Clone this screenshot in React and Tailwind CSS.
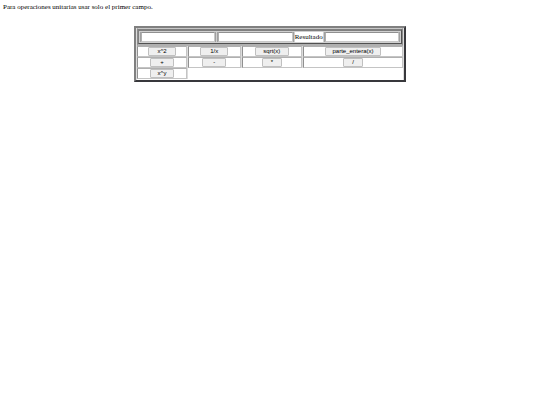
import React, { useState } from "react";
import clsx from "clsx";

const unary = {
  "x^2": (x) => x * x,
  "1/x": (x) => 1 / x,
  "sqrt(x)": (x) => Math.sqrt(x),
  "parte_entera(x)": (x) => Math.trunc(x),
};

const binary = {
  "+": (x, y) => x + y,
  "-": (x, y) => x - y,
  "*": (x, y) => x * y,
  "/": (x, y) => x / y,
  "x^y": (x, y) => Math.pow(x, y),
};

const rows = [
  [
    { op: "x^2", width: "w-7" },
    { op: "1/x", width: "w-7" },
    { op: "sqrt(x)", width: "w-[34px]" },
    { op: "parte_entera(x)", width: "w-14" },
  ],
  [
    { op: "+", width: "w-6" },
    { op: "-", width: "w-6" },
    { op: "*", width: "w-5" },
    { op: "/", width: "w-5" },
  ],
  [{ op: "x^y", width: "w-6" }],
];

const cellBorder = "border border-t-[#b0b0b0] border-l-[#909090] border-r-[#c4c4c4] border-b-[#c4c4c4]";

const Field = ({ label, value, onChange, readOnly }) => (
  <td className="border-x border-[#a0a0a0] p-0">
    <input
      type="text"
      aria-label={label}
      value={value}
      onChange={onChange}
      readOnly={readOnly}
      className="block h-[10px] w-full border border-t-[#909090] border-l-[#b0b0b0] border-r-[#c8c8c8] border-b-[#c8c8c8] bg-white px-px text-[6px] outline-none"
    />
  </td>
);

const OpButton = ({ op, width, onClick }) => (
  <button
    type="button"
    onClick={onClick}
    className={clsx(
      "mx-auto block h-[9px] rounded-[1px] border border-[#c0c0c0] bg-[#efefef] text-center font-['Liberation_Sans',sans-serif] text-[6px] leading-[7px] whitespace-nowrap text-black",
      width
    )}
  >
    {op}
  </button>
);

const App = () => {
  const [x, setX] = useState("");
  const [y, setY] = useState("");
  const [result, setResult] = useState("");

  const handleOperation = (op) => {
    const value = unary[op] ? unary[op](Number(x)) : binary[op](Number(x), Number(y));
    setResult(String(value));
  };

  return (
    <div className="bg-white pt-[3px] font-['Liberation_Serif',serif] text-[7px] leading-[8px] text-black">
      <p className="px-[3px]">Para operaciones unitarias usar solo el primer campo.</p>

      <table className="mx-auto mt-[15px] w-1/2 min-w-[272px] table-fixed border-separate border-spacing-x-px border-spacing-y-0 border-2 border-t-[#808080] border-l-[#808080] border-r-[#38383c] border-b-[#38383c] bg-[#dcdcdc]">
        <colgroup>
          <col className="w-[19%]" />
          <col className="w-[20%]" />
          <col className="w-[23%]" />
          <col className="w-[38%]" />
        </colgroup>
        <tbody>
          <tr>
            <td colSpan={4} className="border-x border-t border-b-2 border-t-[#c8c8c8] border-x-[#8c8c8c] border-b-[#b0b0b0] p-0">
              <table className="w-full border-separate border-spacing-px border border-t-2 border-t-[#808080] border-l-[#808080] border-r-[#505050] border-b-[#505050] bg-[#d0d0d0]">
                <tbody>
                  <tr>
                    <Field label="Primer campo" value={x} onChange={(e) => setX(e.target.value)} />
                    <Field label="Segundo campo" value={y} onChange={(e) => setY(e.target.value)} />
                    <td className="w-7 bg-white p-0 text-center">Resultado</td>
                    <Field label="Resultado" value={result} readOnly />
                  </tr>
                </tbody>
              </table>
            </td>
          </tr>
          {rows.map((row, i) => (
            <tr key={i}>
              {row.map(({ op, width }) => (
                <td key={op} className={clsx("bg-white p-0", cellBorder)}>
                  <OpButton op={op} width={width} onClick={() => handleOperation(op)} />
                </td>
              ))}
              {row.length < 4 && <td colSpan={4 - row.length} className="bg-white p-0" />}
            </tr>
          ))}
          <tr>
            <td colSpan={4} className="h-px bg-white p-0" />
          </tr>
        </tbody>
      </table>
    </div>
  );
};

export default App;
